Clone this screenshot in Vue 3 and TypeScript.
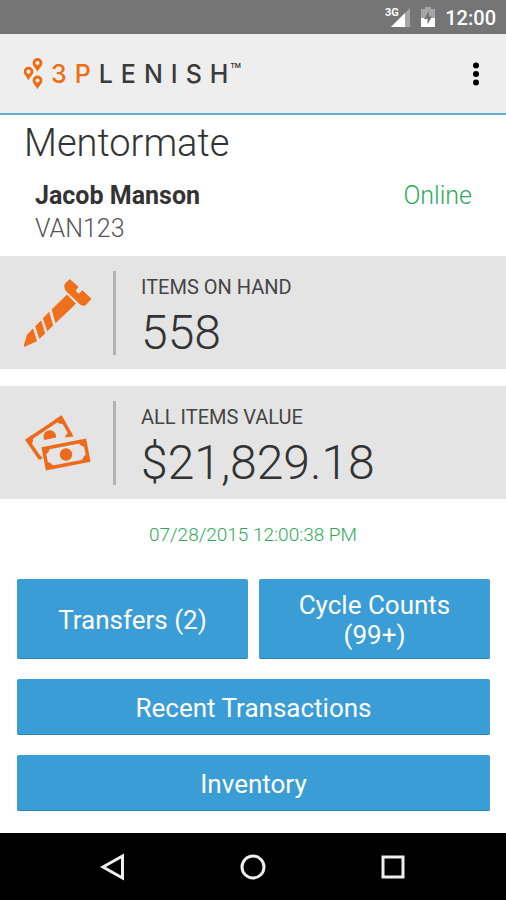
<script setup lang="ts">
import { ref } from 'vue'

interface Stat {
  id: 'items' | 'value'
  label: string
  value: string
}

const company = ref('Mentormate')
const user = ref('Jacob Manson')
const vehicle = ref('VAN123')
const updatedAt = ref('07/28/2015 12:00:38 PM')

const stats: Stat[] = [
  { id: 'items', label: 'ITEMS ON HAND', value: '558' },
  { id: 'value', label: 'ALL ITEMS VALUE', value: '$21,829.18' },
]
</script>

<template>
  <div class="screen">
    <div class="status-bar">
      <svg class="signal" viewBox="0 0 26 24" aria-hidden="true">
        <path d="M26 2V21H7Z" fill="#a6a6a6" />
        <path d="M21 7V21H7Z" fill="#fff" />
        <text x="1" y="10" class="network">3G</text>
      </svg>
      <svg class="battery" viewBox="0 0 14 22" aria-hidden="true">
        <path d="M4 0H10V2H14V11H0V2H4Z" fill="#a6a6a6" />
        <path d="M0 11H14V20H0Z" fill="#fff" />
        <path d="M8 4L3 12H6.500V17.500L11 9.500H8Z" fill="#757575" />
      </svg>
      <span class="clock">12:00</span>
    </div>

    <header class="app-bar">
      <div class="brand">
        <svg class="pins" viewBox="0 0 20 32" aria-hidden="true">
          <g fill="#ee6c12">
            <path id="pin" fill-rule="evenodd" d="M13.500 0A4.900 4.900 0 0 0 8.600 4.900C8.600 8.200 12 10 13.500 13.800C15 10 18.400 8.200 18.400 4.900A4.900 4.900 0 0 0 13.500 0ZM13.500 2.900A2.100 2.100 0 1 1 13.500 7.100A2.100 2.100 0 1 1 13.500 2.900Z" />
            <use href="#pin" x="-9" y="8.700" />
            <use href="#pin" x="0" y="17.500" />
          </g>
        </svg>
        <span class="wordmark"><span class="accent">3P</span>LENIS<span class="last">H</span></span>
        <span class="trademark">TM</span>
      </div>
      <button class="more" type="button" aria-label="More options">
        <svg viewBox="0 0 8 24" aria-hidden="true">
          <circle cx="4" cy="3.500" r="3" />
          <circle cx="4" cy="12" r="3" />
          <circle cx="4" cy="20.500" r="3" />
        </svg>
      </button>
    </header>

    <main class="content">
      <section class="profile">
        <h1>{{ company }}</h1>
        <div class="profile-row">
          <div>
            <p class="user">{{ user }}</p>
            <p class="vehicle">{{ vehicle }}</p>
          </div>
          <p class="online">Online</p>
        </div>
      </section>

      <section class="stats">
        <article v-for="stat in stats" :key="stat.id" class="stat">
          <div class="stat-icon">
            <svg v-if="stat.id === 'items'" viewBox="0 0 68 68" aria-hidden="true">
              <g fill="#ee701c" stroke="#ee701c" stroke-width="0.900" stroke-linejoin="round">
                <path d="M45.700 0.500L54 7.700L51.500 11.500Q52 14.500 55.300 15L58.300 11.700L67 19.700L62 25.500Q59 27.500 56 25L42.300 12Q40 9 41 5Z" />
                <path d="M43 16L51.500 24.700L31.800 43.500L28 30.500Z" />
                <path d="M25 33.500L28.700 46.500L23.500 51.700L19.300 39.300Z" />
                <path d="M17 42L20.700 54.500L15.500 59.300L11.700 47.200Z" />
                <path d="M8.800 50L12.500 62L0 67.500L3.300 56Z" />
              </g>
            </svg>
            <svg v-else viewBox="0 0 68 68" aria-hidden="true">
              <g fill="none" stroke="#ec6b1b" stroke-width="3.500">
                <path d="M16 49.500L3.500 31.200L37 8.700L47.500 27" />
                <rect x="21" y="35.500" width="42" height="20" transform="rotate(-11 42 45.500)" />
              </g>
              <g fill="#ec6b1b">
                <path d="M1.300 31L8 26Q11 33 6 37Z" />
                <path d="M31 10.500L37.300 6.500L42 14Q35 17 31 10.500Z" />
                <path d="M13 44L19 49L15.500 51Z" />
                <path d="M41 28.500Q42 24 46 23L49.500 27.500Z" />
                <path d="M20.500 31A6.300 6.300 0 1 1 32 28.500Z" />
                <circle cx="42" cy="45.500" r="6.200" />
                <g transform="rotate(-11 42 45.500)">
                  <path d="M20 34.500H27.500Q27 41 20 42Z" />
                  <path d="M64 34.500H56.500Q57 41 64 42Z" />
                  <path d="M20 56.500H27.500Q27 50 20 49Z" />
                  <path d="M64 56.500H56.500Q57 50 64 49Z" />
                </g>
              </g>
            </svg>
          </div>
          <div class="stat-text">
            <p class="stat-label">{{ stat.label }}</p>
            <p class="stat-value">{{ stat.value }}</p>
          </div>
        </article>
      </section>

      <time class="updated" datetime="2015-07-28T12:00:38">{{ updatedAt }}</time>

      <div class="actions">
        <button type="button" class="tall">Transfers (2)</button>
        <button type="button" class="tall">Cycle Counts (99+)</button>
        <button type="button" class="wide">Recent Transactions</button>
        <button type="button" class="wide">Inventory</button>
      </div>
    </main>

    <nav class="nav-bar" aria-label="System">
      <button type="button" aria-label="Back">
        <svg viewBox="0 0 28 28"><path d="M23.500 3V25L4 14Z" /></svg>
      </button>
      <button type="button" aria-label="Home">
        <svg viewBox="0 0 28 28"><circle cx="14" cy="14" r="11" /></svg>
      </button>
      <button type="button" aria-label="Overview">
        <svg viewBox="0 0 28 28"><rect x="4" y="4" width="20" height="20" /></svg>
      </button>
    </nav>
  </div>
</template>

<style>
body {
  margin: 0;
  background: #fff;
}
</style>

<style scoped>
.screen {
  display: flex;
  flex-direction: column;
  min-height: 100vh;
  font-family: Roboto, "Liberation Sans", sans-serif;
  color: #333;
}

p,
h1 {
  margin: 0;
}

button {
  padding: 0;
  border: 0;
  background: none;
  font: inherit;
  cursor: pointer;
}

.status-bar {
  display: flex;
  align-items: center;
  justify-content: flex-end;
  box-sizing: border-box;
  height: 34px;
  padding: 2px 10px 0 0;
  background: #757575;
  color: #fff;
}

.signal {
  width: 26px;
  height: 24px;
  margin-right: 11px;
}

.network {
  font-size: 11px;
  font-weight: 700;
  fill: #fff;
}

.battery {
  width: 14px;
  height: 22px;
  margin-right: 10px;
}

.clock {
  font-size: 20px;
  font-weight: 500;
  line-height: 24px;
}

.app-bar {
  display: flex;
  align-items: center;
  justify-content: space-between;
  height: 79px;
  padding: 0 22px 0 24px;
  border-bottom: 2px solid #64add8;
  background: #eee;
}

.brand {
  display: flex;
  align-items: center;
}

.pins {
  width: 20px;
  height: 32px;
  margin-right: 7px;
}

.wordmark {
  font-family: Inter, Roboto, sans-serif;
  font-size: 25px;
  font-weight: 500;
  line-height: 30px;
  letter-spacing: 8px;
  color: #3b3b3b;
}

.accent {
  color: #ee6c12;
}

.last {
  letter-spacing: 0;
}

.trademark {
  align-self: flex-start;
  margin-top: 4px;
  margin-left: 2px;
  font-size: 7px;
  font-weight: 500;
  line-height: 8px;
}

.more {
  width: 16px;
  height: 32px;
}

.more svg {
  display: block;
  width: 8px;
  height: 24px;
  margin: 0 auto;
  fill: #000;
}

.content {
  flex: 1;
}

.profile {
  padding: 6px 34px 12px 24px;
}

h1 {
  font-size: 38px;
  font-weight: 300;
  line-height: 44px;
}

.profile-row {
  display: flex;
  justify-content: space-between;
  margin-top: 14px;
  padding-left: 11px;
  font-size: 25px;
  font-weight: 300;
  line-height: 34px;
}

.user {
  font-weight: 700;
}

.vehicle {
  line-height: 31px;
  color: #555;
}

.online {
  color: #2fa85a;
}

.stats {
  display: flex;
  flex-direction: column;
  gap: 17px;
}

.stat {
  display: flex;
  height: 113px;
  box-sizing: border-box;
  padding: 15px 24px 14px;
  background: #e4e4e4;
}

.stat-icon {
  display: flex;
  align-items: center;
  width: 89px;
  border-right: 3px solid #b3b3b3;
}

.stat-icon svg {
  width: 68px;
  height: 68px;
}

.stat-text {
  padding-left: 25px;
}

.stat-label {
  font-size: 20px;
  line-height: 32px;
  font-weight: 400;
  color: #444;
}

.stat-value {
  font-size: 48px;
  font-weight: 300;
  line-height: 60px;
}

.updated {
  display: block;
  margin-top: 24px;
  text-align: center;
  font-size: 19px;
  font-weight: 300;
  line-height: 24px;
  color: #2fa85a;
}

.actions {
  display: grid;
  grid-template-columns: 1fr 1fr;
  gap: 20px 11px;
  padding: 32px 16px 22px 17px;
}

.actions button {
  height: 56px;
  padding-top: 2px;
  border-radius: 2px;
  border-bottom: 1px solid #2583b8;
  background: #3a9dd6;
  color: #fff;
  font-size: 26px;
  line-height: 30px;
}

.actions .tall {
  height: 80px;
  padding: 2px 32px 0;
}

.wide {
  grid-column: 1 / -1;
}

.nav-bar {
  display: flex;
  justify-content: center;
  gap: 112px;
  height: 67px;
  background: #000;
}

.nav-bar svg {
  display: block;
  width: 28px;
  height: 28px;
  fill: none;
  stroke: #eee;
  stroke-width: 3px;
}
</style>
